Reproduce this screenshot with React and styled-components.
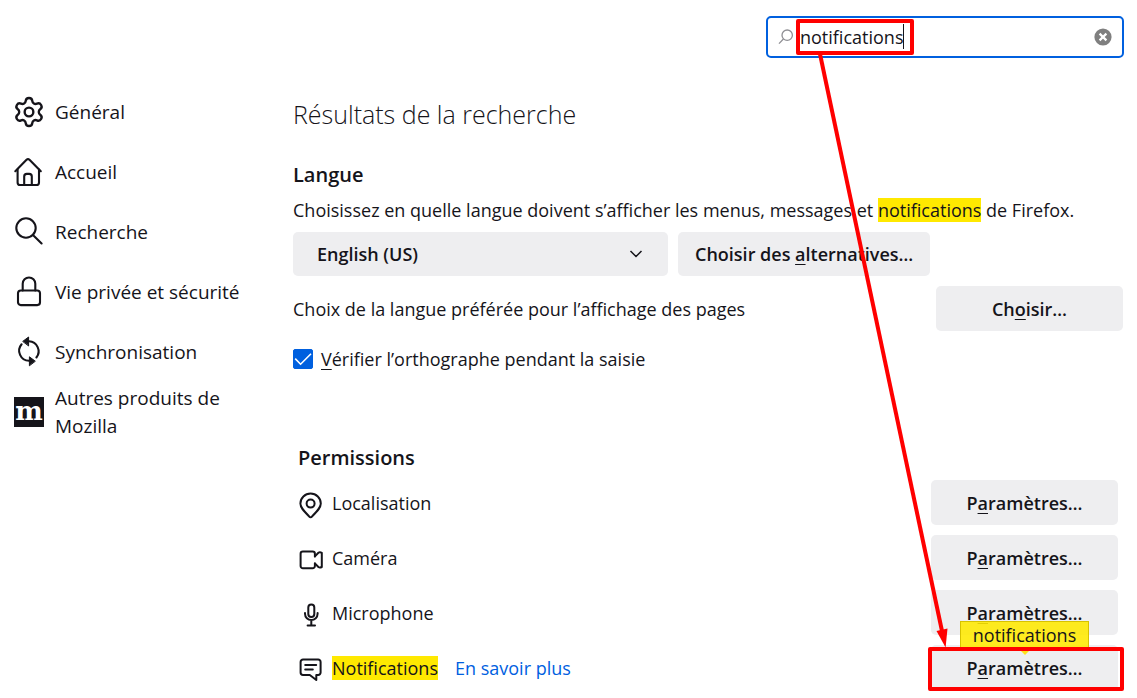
import React, { useState } from 'react';
import styled, { createGlobalStyle } from 'styled-components';

const categories = [
  { label: 'Général', icon: 'gear' },
  { label: 'Accueil', icon: 'home' },
  { label: 'Recherche', icon: 'search' },
  { label: 'Vie privée et sécurité', icon: 'lock' },
  { label: 'Synchronisation', icon: 'sync' },
  { label: 'Autres produits de Mozilla', icon: 'mozilla' },
];

const permissions = [
  { label: 'Localisation', icon: 'pin' },
  { label: 'Caméra', icon: 'camera' },
  { label: 'Microphone', icon: 'mic' },
  { label: 'Notifications', icon: 'message', found: true },
];

const CategoryIcon = ({ name }) => {
  if (name === 'mozilla') return <MozillaLogo aria-hidden="true">m</MozillaLogo>;
  if (name === 'gear') {
    return (
      <Icon $size={30} $stroke={1.7} viewBox="1.3 1.3 21.4 21.4">
        <path d="M9.671 4.136a2.34 2.34 0 0 1 4.659 0 2.34 2.34 0 0 0 3.319 1.915 2.34 2.34 0 0 1 2.33 4.033 2.34 2.34 0 0 0 0 3.831 2.34 2.34 0 0 1-2.33 4.033 2.34 2.34 0 0 0-3.319 1.915 2.34 2.34 0 0 1-4.659 0 2.34 2.34 0 0 0-3.32-1.915 2.34 2.34 0 0 1-2.33-4.033 2.34 2.34 0 0 0 0-3.831A2.34 2.34 0 0 1 6.35 6.051a2.34 2.34 0 0 0 3.319-1.915" />
        <circle cx="12" cy="12" r="3.1" />
      </Icon>
    );
  }
  return (
    <Icon $size={30} $stroke={2.1} viewBox="0 0 30 30">
      {name === 'home' && (
        <>
          <path d="M1.3 14.2 L12.5 2.7 Q14 1.4 15.5 2.7 L26.8 14.2" />
          <path d="M3.6 12.5 V25.4 A2.6 2.6 0 0 0 6.2 28 H22.4 A2.6 2.6 0 0 0 25 25.4 V12.5" />
          <path d="M10.2 28 V19.5 A2.6 2.6 0 0 1 12.8 16.9 H15.2 A2.6 2.6 0 0 1 17.8 19.5 V28" />
        </>
      )}
      {name === 'search' && (
        <>
          <circle cx="12" cy="11" r="9.7" />
          <path d="M19.2 18.2 L27.6 26.4" />
        </>
      )}
      {name === 'lock' && (
        <>
          <rect x="4" y="13.5" width="22" height="14.6" rx="2.8" />
          <path d="M8.7 13.5 V6.8 A6.3 6.3 0 0 1 21.3 6.8 V13.5" />
        </>
      )}
      {name === 'sync' && (
        <>
          <path d="M15 4.3 A10 10 0 0 1 22.4 20.5" />
          <path d="M7.6 7.3 A10 10 0 0 0 15 23.8" />
          <path d="M9 4.2 L14.6 0 V8.6 Z M21 24 L15.4 19.8 V28.4 Z" fill="currentColor" strokeWidth="1" />
        </>
      )}
    </Icon>
  );
};

const PermissionIcon = ({ name }) => (
  <Icon $size={26} $stroke={2} viewBox="0 0 26 26">
    {name === 'pin' && (
      <>
        <path d="M12.6 25.2 Q11.8 25.2 11 24.3 C5.6 18.8 2.4 15.5 2.4 11.6 A10.2 10 0 0 1 22.8 11.6 C22.8 15.5 19.6 18.8 14.2 24.3 Q13.4 25.2 12.6 25.2 Z" />
        <circle cx="12.6" cy="11.6" r="4" />
      </>
    )}
    {name === 'camera' && (
      <>
        <path d="M16.9 9.4 V6.8 A2.3 2.3 0 0 0 14.6 4.5 H4.9 A2.3 2.3 0 0 0 2.6 6.8 V19 A2.3 2.3 0 0 0 4.9 21.3 H14.6 A2.3 2.3 0 0 0 16.9 19 V16.4" />
        <path d="M16.9 9.4 L20.4 5.8 Q21.8 4.8 23.8 5.8 V20 Q21.8 21 20.4 20 L16.9 16.4" />
      </>
    )}
    {name === 'mic' && (
      <>
        <rect x="10.3" y="2.6" width="6" height="12.4" rx="3" />
        <path d="M7 11 V11.8 A6.3 6.3 0 0 0 19.6 11.8 V11 M13.3 18.2 V23.4 M9.6 23.6 H17" />
      </>
    )}
    {name === 'message' && (
      <>
        <path d="M5 2.6 H20.2 A2.4 2.4 0 0 1 22.6 5 V15.6 A2.4 2.4 0 0 1 20.2 18 H18.3 V23 L11.8 18 H5 A2.4 2.4 0 0 1 2.6 15.6 V5 A2.4 2.4 0 0 1 5 2.6 Z" />
        <path d="M7.2 8 H18.2 M7.2 12.6 H14.8" />
      </>
    )}
  </Icon>
);

const App = () => {
  const [query, setQuery] = useState('notifications');
  const [spellcheck, setSpellcheck] = useState(true);

  return (
    <Page>
      <GlobalStyle />
      <Header>
        <SearchBox>
          <SearchGlyph viewBox="0 0 16 16">
            <circle cx="9.2" cy="6.2" r="5.2" />
            <path d="M5.4 10 L1 14.6" />
          </SearchGlyph>
          <SearchInput
            aria-label="Rechercher"
            value={query}
            onChange={(e) => setQuery(e.target.value)}
          />
          <ClearButton aria-label="Effacer" onClick={() => setQuery('')}>
            <svg width="18" height="18" viewBox="0 0 18 18">
              <circle cx="9" cy="9" r="8.6" fill="#7f7f7f" />
              <path d="M5.6 5.6 L12.4 12.4 M12.4 5.6 L5.6 12.4" stroke="#fff" strokeWidth="2.2" />
            </svg>
          </ClearButton>
          <Caret />
          <SearchFrame />
          <Arrow viewBox="0 0 140 600">
            <path d="M5 0 L127 577" stroke="#f00" strokeWidth="4" />
            <path d="M121.5 577 L132.5 574.5 L130.6 593.5 Z" fill="#f00" />
          </Arrow>
        </SearchBox>
      </Header>
      <Columns>
        <Sidebar>
          {categories.map((item) => (
            <Category key={item.label} href="#">
              <CategoryIcon name={item.icon} />
              <CategoryLabel>{item.label}</CategoryLabel>
            </Category>
          ))}
        </Sidebar>
        <Main>
          <Title>Résultats de la recherche</Title>
          <Section>
            <Heading>Langue</Heading>
            <Description>
              Choisissez en quelle langue doivent s’afficher les menus, messages et{' '}
              <Mark>notifications</Mark> de Firefox.
            </Description>
            <Controls>
              <SelectWrap>
                <Select aria-label="Langue" defaultValue="en">
                  <option value="en">English (US)</option>
                  <option value="fr">Français</option>
                </Select>
                <Chevron viewBox="0 0 14 8">
                  <path d="M1.5 1 L7 6.5 L12.5 1" />
                </Chevron>
              </SelectWrap>
              <Button>
                Choisir des <u>a</u>lternatives…
              </Button>
            </Controls>
            <Row>
              <RowLabel>Choix de la langue préférée pour l’affichage des pages</RowLabel>
              <Button $wide>
                Ch<u>o</u>isir…
              </Button>
            </Row>
            <CheckLabel>
              <CheckWrap>
                <Checkbox
                  type="checkbox"
                  checked={spellcheck}
                  onChange={(e) => setSpellcheck(e.target.checked)}
                />
                <Tick viewBox="0 0 20 20">
                  <path d="M2.2 9.6 L7.6 15.2 L18 4.8" />
                </Tick>
              </CheckWrap>
              <span>
                <u>V</u>érifier l’orthographe pendant la saisie
              </span>
            </CheckLabel>
          </Section>
          <Section $inset>
            <Heading>Permissions</Heading>
            <PermissionList>
              {permissions.map((item) => (
                <Row key={item.label}>
                  <IconSlot>
                    <PermissionIcon name={item.icon} />
                  </IconSlot>
                  <RowLabel>
                    {item.found ? <Mark>{item.label}</Mark> : item.label}
                    {item.found && <LearnMore href="#">En savoir plus</LearnMore>}
                  </RowLabel>
                  <ButtonSlot>
                    <Button $wide>
                      P<u>a</u>ramètres…
                    </Button>
                    {item.found && (
                      <>
                        <Tooltip>notifications</Tooltip>
                        <ButtonFrame />
                      </>
                    )}
                  </ButtonSlot>
                </Row>
              ))}
            </PermissionList>
          </Section>
        </Main>
      </Columns>
    </Page>
  );
};

export default App;

const GlobalStyle = createGlobalStyle`
  * {
    box-sizing: border-box;
  }
  body {
    margin: 0;
    background-color: #fff;
    color: #15141a;
    font-family: "Open Sans", "Noto Sans", sans-serif;
    font-size: 18px;
    line-height: 24px;
  }
  button, input, select {
    font: inherit;
    color: inherit;
  }
  u {
    text-decoration-thickness: 1px;
    text-underline-offset: 3px;
  }
`;

const Page = styled.div`
  overflow: hidden;
`;
const Header = styled.header`
  display: flex;
  justify-content: flex-end;
  padding: 16px 13px 0;
`;
const SearchBox = styled.div`
  position: relative;
  display: flex;
  align-items: center;
  width: 358px;
  height: 42px;
  padding: 0 10px;
  border: 2px solid #0060df;
  border-radius: 5px;
`;
const SearchGlyph = styled.svg`
  width: 16px;
  height: 16px;
  fill: none;
  stroke: #8f8f94;
  stroke-width: 1.3;
`;
const SearchInput = styled.input`
  flex: 1;
  min-width: 0;
  padding: 0 6px;
  border: 0;
  outline: 0;
  background: transparent;
`;
const ClearButton = styled.button`
  display: flex;
  padding: 0;
  border: 0;
  background: transparent;
`;
const Caret = styled.span`
  position: absolute;
  left: 135px;
  top: 6px;
  width: 1px;
  height: 25px;
  background-color: #15141a;
`;
const SearchFrame = styled.div`
  position: absolute;
  left: 28px;
  top: 1px;
  width: 118px;
  height: 36px;
  border: 4px solid #f00;
  border-radius: 2px;
  pointer-events: none;
`;
const Arrow = styled.svg`
  position: absolute;
  z-index: 3;
  left: 47px;
  top: 36px;
  width: 140px;
  height: 600px;
  pointer-events: none;
`;
const Columns = styled.div`
  display: grid;
  grid-template-columns: 279px 1fr;
  padding: 24px 14px;
`;
const Sidebar = styled.nav`
  display: flex;
  flex-direction: column;
`;
const Category = styled.a`
  display: flex;
  align-items: center;
  gap: 11px;
  height: 60px;
  color: inherit;
  text-decoration: none;
`;
const CategoryLabel = styled.span`
  width: 190px;
  font-size: 19px;
  line-height: 28px;
`;
const Icon = styled.svg`
  flex: none;
  width: ${(props) => props.$size}px;
  height: ${(props) => props.$size}px;
  overflow: visible;
  fill: none;
  stroke: currentColor;
  stroke-width: ${(props) => props.$stroke};
  stroke-linecap: round;
  stroke-linejoin: round;
`;
const MozillaLogo = styled.span`
  display: flex;
  justify-content: center;
  flex: none;
  width: 30px;
  height: 30px;
  background-color: #15141a;
  color: #fff;
  font: bold 26px/29px "DejaVu Serif", serif;
`;
const Main = styled.main`
  min-width: 0;
`;
const Title = styled.h1`
  margin: 15px 0 30px;
  font-size: 25px;
  font-weight: 300;
  line-height: 34px;
`;
const Section = styled.section`
  padding: ${(props) => (props.$inset ? '73px 5px 0' : '0')};
`;
const Heading = styled.h2`
  margin: 0;
  font-size: 20px;
  font-weight: 600;
  line-height: 28px;
`;
const Description = styled.p`
  margin: 9px 0 10px;
  white-space: nowrap;
`;
const Mark = styled.mark`
  background-color: #ffe900;
  color: inherit;
`;
const Controls = styled.div`
  display: flex;
  gap: 10px;
  margin-bottom: 10px;
`;
const SelectWrap = styled.div`
  display: grid;
  align-items: center;
  width: 375px;
`;
const Select = styled.select`
  grid-area: 1 / 1;
  height: 44px;
  padding: 0 24px;
  border: 0;
  border-radius: 5px;
  background-color: #eeeef0;
  font-weight: 600;
  appearance: none;
`;
const Chevron = styled.svg`
  grid-area: 1 / 1;
  justify-self: end;
  width: 14px;
  height: 8px;
  margin-right: 25px;
  fill: none;
  stroke: #15141a;
  stroke-width: 1.5;
  pointer-events: none;
`;
const Button = styled.button`
  width: ${(props) => (props.$wide ? '187px' : 'auto')};
  height: ${(props) => (props.$wide ? '45px' : '44px')};
  padding: 0 17px;
  border: 0;
  border-radius: 5px;
  background-color: #eeeef0;
  font-weight: 600;
  white-space: nowrap;
`;
const Row = styled.div`
  display: flex;
  align-items: center;
`;
const RowLabel = styled.span`
  flex: 1;
`;
const CheckLabel = styled.label`
  display: flex;
  align-items: center;
  gap: 8px;
  margin-top: 16px;
`;
const CheckWrap = styled.span`
  display: grid;
`;
const Checkbox = styled.input`
  grid-area: 1 / 1;
  width: 20px;
  height: 20px;
  margin: 0;
  border: 1px solid #8f8f9d;
  border-radius: 2px;
  appearance: none;
  &:checked {
    border-color: #0060df;
    background-color: #0060df;
  }
`;
const Tick = styled.svg`
  grid-area: 1 / 1;
  width: 20px;
  height: 20px;
  fill: none;
  stroke: #fff;
  stroke-width: 1.6;
  pointer-events: none;
`;
const PermissionList = styled.div`
  display: flex;
  flex-direction: column;
  gap: 10px;
  margin-top: 8px;
`;
const IconSlot = styled.span`
  display: flex;
  padding-top: 5px;
  margin-right: 8px;
`;
const LearnMore = styled.a`
  margin-left: 17px;
  color: #0060df;
  text-decoration: none;
`;
const ButtonSlot = styled.div`
  position: relative;
  display: flex;
`;
const ButtonFrame = styled.div`
  position: absolute;
  z-index: 2;
  inset: 2px -6px -1px -3px;
  border: 4px solid #f00;
  border-radius: 2px;
  pointer-events: none;
`;
const Tooltip = styled.div`
  position: absolute;
  z-index: 1;
  left: 29px;
  top: -24px;
  width: 129px;
  height: 29px;
  border: 1px solid #d7c200;
  background-color: #ffe900e0;
  text-align: center;
  line-height: 27px;
  &::after {
    content: '';
    position: absolute;
    z-index: 1;
    left: 59px;
    top: 28px;
    border: 5px solid transparent;
    border-top-color: #ffe11a;
  }
`;
